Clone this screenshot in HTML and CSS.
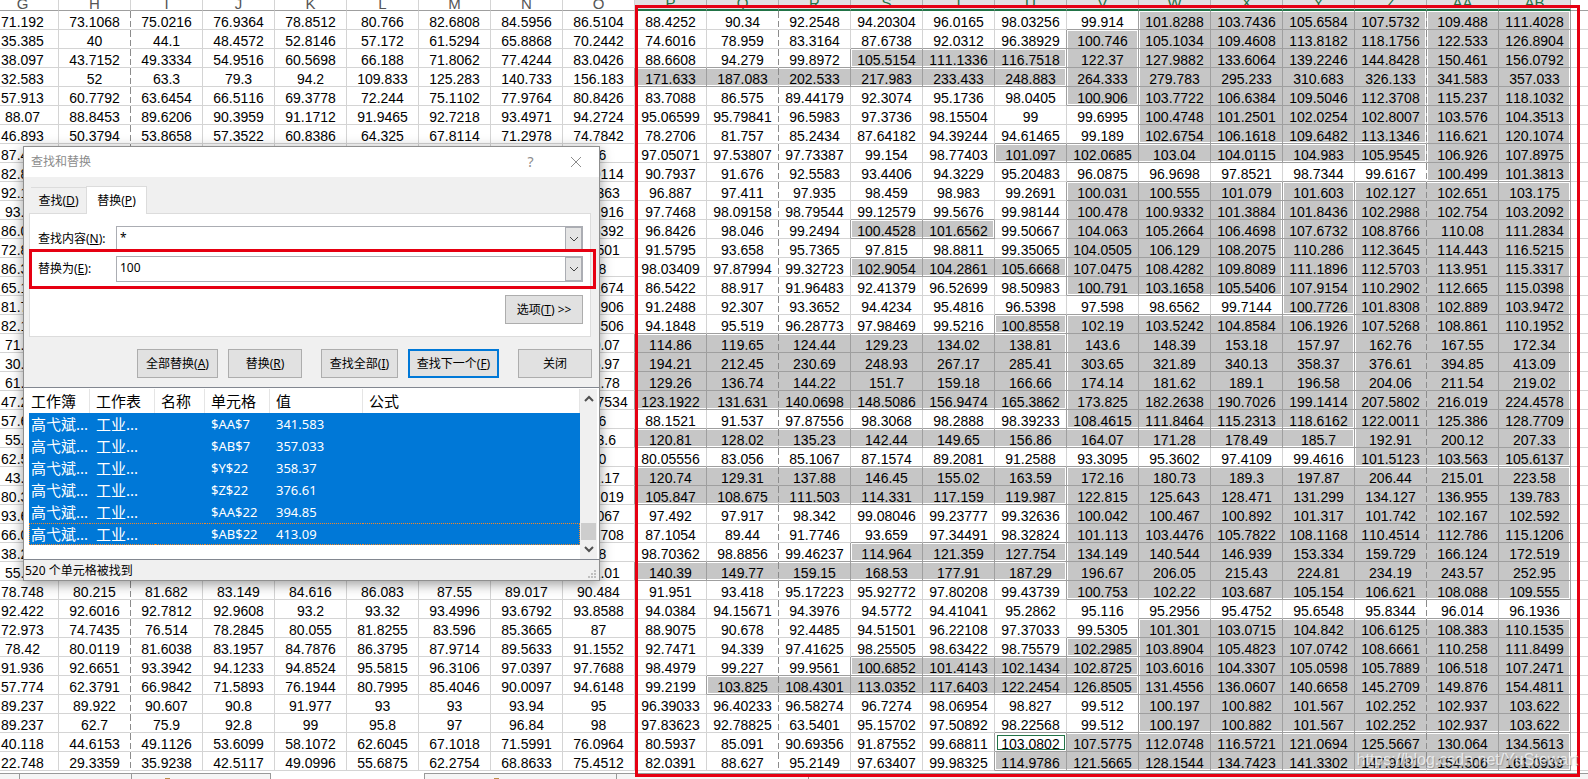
FILE: index.html
```html
<!DOCTYPE html>
<html lang="zh-CN">
<head>
<meta charset="utf-8">
<title>查找和替换</title>
<link rel="stylesheet" href="styles.css">
</head>
<body>
<main class="workbook">
  <table class="sheet" id="sheet">
    <thead><tr id="columns"></tr></thead>
    <tbody id="rows"></tbody>
  </table>
  <footer class="sheet-tabs">
    <div class="tab-group tab-group-start"><i class="w-s"></i><i class="w-m"></i><i class="w-m mark"></i></div>
    <div class="tab-active"></div>
    <div class="tab-group tab-group-end"><i class="w-l mark"></i><i class="w-l"></i><i></i></div>
  </footer>
  <div class="highlight highlight-range"></div>
  <div class="watermark">https://blog.csdn.net/YuStewart</div>
</main>

<section class="dialog" role="dialog" aria-labelledby="dialog-title">
  <header class="title-bar">
    <h1 id="dialog-title">查找和替换</h1>
    <button class="title-button" aria-label="帮助">?</button>
    <button class="title-button" aria-label="关闭窗口"><svg width="12" height="12" viewBox="0 0 12 12"><path d="M1 1L11 11M11 1L1 11" stroke="#8c8c8c" fill="none"/></svg></button>
  </header>
  <div class="tabs" role="tablist">
    <button class="tab" role="tab">查找(<u>D</u>)</button>
    <button class="tab tab-current" role="tab" aria-selected="true">替换(<u>P</u>)</button>
  </div>
  <form class="panel">
    <div class="field">
      <label for="find">查找内容(<u>N</u>):</label>
      <div class="combo"><input id="find" type="text" value="*"><button type="button" aria-label="查找记录"><svg width="10" height="6" viewBox="0 0 10 6"><path d="M1 1L5 5L9 1" stroke="#444" fill="none"/></svg></button></div>
    </div>
    <div class="field">
      <label for="replace">替换为(<u>E</u>):</label>
      <div class="combo"><input id="replace" type="text" value="100"><button type="button" aria-label="替换记录"><svg width="10" height="6" viewBox="0 0 10 6"><path d="M1 1L5 5L9 1" stroke="#444" fill="none"/></svg></button></div>
    </div>
    <button type="button" class="button button-options">选项(<u>T</u>) &gt;&gt;</button>
  </form>
  <div class="actions">
    <button class="button">全部替换(<u>A</u>)</button>
    <button class="button button-narrow">替换(<u>R</u>)</button>
    <button class="button button-all">查找全部(<u>I</u>)</button>
    <button class="button button-default">查找下一个(<u>F</u>)</button>
    <button class="button button-narrow button-apart">关闭</button>
  </div>
  <div class="results">
    <table class="result-table">
      <colgroup><col class="c-book"><col class="c-page"><col class="c-name"><col class="c-cell"><col class="c-value"><col></colgroup>
      <thead><tr><th>工作簿</th><th>工作表</th><th>名称</th><th>单元格</th><th>值</th><th>公式</th></tr></thead>
      <tbody>
        <tr><td>高弋斌...</td><td>工业...</td><td></td><td>$AA$7</td><td>341.583</td><td></td></tr>
        <tr><td>高弋斌...</td><td>工业...</td><td></td><td>$AB$7</td><td>357.033</td><td></td></tr>
        <tr><td>高弋斌...</td><td>工业...</td><td></td><td>$Y$22</td><td>358.37</td><td></td></tr>
        <tr><td>高弋斌...</td><td>工业...</td><td></td><td>$Z$22</td><td>376.61</td><td></td></tr>
        <tr><td>高弋斌...</td><td>工业...</td><td></td><td>$AA$22</td><td>394.85</td><td></td></tr>
        <tr class="focused"><td>高弋斌...</td><td>工业...</td><td></td><td>$AB$22</td><td>413.09</td><td></td></tr>
      </tbody>
    </table>
    <div class="scrollbar">
      <svg width="10" height="7" viewBox="0 0 10 7"><path d="M1 6L5 2L9 6" stroke="#505050" stroke-width="2" fill="none"/></svg>
      <div class="thumb"></div>
      <svg width="10" height="7" viewBox="0 0 10 7"><path d="M1 1L5 5L9 1" stroke="#505050" stroke-width="2" fill="none"/></svg>
    </div>
  </div>
  <footer class="status"><span>520 个单元格被找到</span>
    <svg width="10" height="10" viewBox="0 0 10 10" fill="#bfbfbf"><path d="M7 1h2v2h-2zM4 4h2v2h-2zM7 4h2v2h-2zM1 7h2v2h-2zM4 7h2v2h-2zM7 7h2v2h-2z"/></svg>
  </footer>
  <div class="highlight highlight-field"></div>
</section>
<script src="sheet.js"></script>
</body>
</html>
```
FILE: styles.css
```css
* { box-sizing: border-box; }

body {
  margin: 0;
  height: 100vh;
  overflow: hidden;
  position: relative;
  background: #fff;
  color: #000;
  font-family: "Liberation Sans", "Noto Sans CJK SC", sans-serif;
  font-kerning: none;
}

button, input {
  margin: 0;
  padding: 0;
  border: 0;
  border-radius: 0;
  background: none;
  color: inherit;
  font: inherit;
}

/* Sheet */
.workbook {
  position: relative;
  height: 100%;
  display: flex;
  flex-direction: column;
  overflow: hidden;
}

.sheet {
  flex: none;
  width: calc(100% + 13px);
  margin-left: -13px;
  table-layout: fixed;
  border-collapse: separate;
  border-spacing: 0;
  font-size: 14px;
  line-height: 14px;
}

.sheet th, .sheet td {
  padding: 0;
  border-right: 1px solid #d4d4d4;
  border-bottom: 1px solid #d4d4d4;
  font-weight: normal;
  text-align: center;
  white-space: nowrap;
}

.sheet th {
  width: 72px;
  height: 11px;
  border-bottom-color: #9f9f9f;
  color: #555;
}

.sheet th.rest { width: auto; }

.sheet th span {
  display: flex;
  align-items: flex-end;
  justify-content: center;
  height: 9px;
  font-size: 15px;
  line-height: 12px;
}

.sheet th.in-range {
  background: #e1e1e1;
  border-right-color: #b0b0b0;
  border-bottom: 2px solid #217346;
  color: #217346;
}

.sheet td {
  height: 19px;
  padding-top: 4px;
}

.sheet .rest { border-right: 0; }

.sheet td.page-break {
  border-right-color: transparent;
  background-image: linear-gradient(#8c8c8c 0 7px, transparent 7px 10px, #8c8c8c 10px 16px, transparent 16px);
  background-origin: border-box;
  background-position: right top;
  background-repeat: no-repeat;
  background-size: 1px 100%;
}

.sheet td.line-right { border-right-color: #9f9f9f; }
.sheet td.line-bottom { border-bottom-color: #9f9f9f; }
.sheet td.page-break.line-right { border-right-color: transparent; }

.sheet td.selected {
  background-color: #c6c6c6;
  box-shadow: inset var(--left, 0 0) #fff, inset var(--right, 0 0) #fff,
    inset var(--top, 0 0) #fff, inset var(--bottom, 0 0) #fff;
}

.edge-left { --left: 1px 0; }
.edge-right { --right: -1px 0; }
.edge-top { --top: 0 1px; }
.edge-bottom { --bottom: 0 -1px; }

.sheet td.active {
  background-color: #fff;
  outline: 1px solid #217346;
  outline-offset: -3px;
}

.sheet-tabs {
  flex: 1;
  display: flex;
  margin-top: 2px;
}

.tab-group {
  display: flex;
  border-top: 1px solid #999;
  background: #f5f5f5;
}

.tab-group i { position: relative; border-right: 1px solid #999; }
.tab-group i:last-child { flex: 1; border-right: 0; }
.tab-group-start { width: 271px; border-right: 1px solid #999; }
.tab-group-end { flex: 1; border-left: 1px solid #999; }
.tab-active { width: 153px; }
.w-s { width: 20px; }
.w-m { width: 112px; }
.w-l { width: 192px; }

.mark::after {
  content: "";
  position: absolute;
  left: 36%;
  bottom: 0;
  width: 5px;
  height: 1px;
  background: #b98a4a;
}

.tab-group-start .mark::after { left: 24%; }

.highlight {
  position: absolute;
  border: 3px solid #e60012;
  pointer-events: none;
}

.highlight-range { left: 635px; right: 8px; top: 5px; bottom: 2px; }
.highlight-field { left: 5px; right: 3px; top: 102px; height: 40px; }

.watermark {
  position: absolute;
  right: 10px;
  bottom: 9px;
  color: rgba(255, 255, 255, 0.7);
  font-size: 16px;
  line-height: 20px;
  text-shadow: 1px 1px 1px rgba(120, 120, 120, 0.5);
}

/* Dialog */
.dialog {
  position: absolute;
  left: 23px;
  top: 146px;
  width: 577px;
  border: 1px solid #8f8f8f;
  background: #f0f0f0;
  box-shadow: 0 3px 12px rgba(0, 0, 0, 0.4);
  font-family: "Noto Sans", "Noto Sans CJK SC", sans-serif;
  font-size: 12px;
  line-height: 16px;
}

.title-bar {
  display: flex;
  align-items: center;
  height: 30px;
  padding: 0 1px 0 7px;
  background: #fff;
  color: #8c8c8c;
}

.title-bar h1 {
  flex: 1;
  margin: 0;
  font-size: 12px;
  font-weight: normal;
}

.title-button {
  display: flex;
  align-items: center;
  justify-content: center;
  width: 45px;
  height: 30px;
  font-size: 14px;
}

.tabs {
  display: flex;
  align-items: flex-end;
  height: 37px;
  padding-left: 7px;
}

.tab {
  width: 55px;
  height: 26px;
  margin-bottom: 1px;
  border-top: 1px solid #dcdcdc;
}

.tab-current {
  position: relative;
  width: 61px;
  height: 28px;
  margin-bottom: 0;
  border: 1px solid #dcdcdc;
  border-bottom: 0;
  background: #fff;
}

.panel {
  display: flex;
  flex-direction: column;
  gap: 4px;
  margin: -1px 8px 0 5px;
  padding: 12px 7px 12px 8px;
  border: 1px solid #dcdcdc;
  background: #fff;
}

.field { display: flex; align-items: center; }
.field label { width: 78px; }

.combo {
  flex: 1;
  display: flex;
  height: 26px;
  border: 1px solid #abadb3;
}

.combo input {
  flex: 1;
  min-width: 0;
  padding: 0 0 2px 3px;
  outline: 0;
}

.combo button {
  display: flex;
  align-items: center;
  justify-content: center;
  width: 17px;
  border: 1px solid #abadb3;
  background: #e5e5e5;
}

.button {
  width: 81px;
  height: 29px;
  border: 1px solid #adadad;
  background: #e1e1e1;
  white-space: nowrap;
}

.button-options { align-self: flex-end; width: 78px; margin-top: 9px; }

.actions {
  display: flex;
  justify-content: flex-end;
  gap: 10px;
  padding: 12px 7px 9px 0;
}

.button-narrow { width: 74px; }
.button-all { width: 77px; margin-left: 9px; }
.button-apart { margin-left: 9px; }
.button-default { width: 91px; border: 2px solid #0078d7; }

.results {
  display: flex;
  justify-content: space-between;
  padding: 1px 2px 0 5px;
  border-top: 1px solid #828790;
  border-bottom: 1px solid #828790;
  background: #fff;
}

.result-table {
  width: 551px;
  margin-bottom: 14px;
  table-layout: fixed;
  border-collapse: separate;
  border-spacing: 0;
  font-size: 13px;
  line-height: 20px;
}

.c-book { width: 61px; }
.c-page { width: 65px; }
.c-name { width: 50px; }
.c-cell { width: 65px; }
.c-value { width: 93px; }

.result-table th {
  height: 24px;
  padding: 0 0 0 6px;
  border-right: 1px solid #e5e5e5;
  font-size: 15px;
  font-weight: normal;
  text-align: left;
}

.result-table td {
  height: 22px;
  padding: 0 0 0 6px;
  background: #0078d7;
  color: #fff;
  white-space: nowrap;
}

.result-table th:first-child,
.result-table td:first-child { padding-left: 2px; }
.result-table td:nth-child(-n+2) { font-size: 15px; }

.focused td { border: 1px dotted #f28728; border-width: 1px 0; line-height: 18px; }
.focused td:first-child { border-left-width: 1px; padding-left: 1px; }
.focused td:last-child { border-right-width: 1px; }

.scrollbar {
  display: flex;
  flex-direction: column;
  align-items: center;
  width: 17px;
  padding: 6px 0;
  background: #f0f0f0;
}

.thumb {
  width: 15px;
  height: 17px;
  margin: auto 0 6px;
  background: #cdcdcd;
}

.status {
  display: flex;
  align-items: flex-end;
  justify-content: space-between;
  height: 20px;
  padding: 0 2px 1px 1px;
}
```
FILE: sheet.js
```js
const columns = "G H I J K L M N O P Q R S T U V W X Y Z AA AB".split(" ");

// One line per row, G to AB; "-" is an empty cell.
const data = `
71.192 73.1068 75.0216 76.9364 78.8512 80.766 82.6808 84.5956 86.5104 88.4252 90.34 92.2548 94.20304 96.0165 98.03256 99.914 101.8288 103.7436 105.6584 107.5732 109.488 111.4028
35.385 40 44.1 48.4572 52.8146 57.172 61.5294 65.8868 70.2442 74.6016 78.959 83.3164 87.6738 92.0312 96.38929 100.746 105.1034 109.4608 113.8182 118.1756 122.533 126.8904
38.097 43.7152 49.3334 54.9516 60.5698 66.188 71.8062 77.4244 83.0426 88.6608 94.279 99.8972 105.5154 111.1336 116.7518 122.37 127.9882 133.6064 139.2246 144.8428 150.461 156.0792
32.583 52 63.3 79.3 94.2 109.833 125.283 140.733 156.183 171.633 187.083 202.533 217.983 233.433 248.883 264.333 279.783 295.233 310.683 326.133 341.583 357.033
57.913 60.7792 63.6454 66.5116 69.3778 72.244 75.1102 77.9764 80.8426 83.7088 86.575 89.44179 92.3074 95.1736 98.0405 100.906 103.7722 106.6384 109.5046 112.3708 115.237 118.1032
88.07 88.8453 89.6206 90.3959 91.1712 91.9465 92.7218 93.4971 94.2724 95.06599 95.79841 96.5983 97.3736 98.15504 99 99.6995 100.4748 101.2501 102.0254 102.8007 103.576 104.3513
46.893 50.3794 53.8658 57.3522 60.8386 64.325 67.8114 71.2978 74.7842 78.2706 81.757 85.2434 87.64182 94.39244 94.61465 99.189 102.6754 106.1618 109.6482 113.1346 116.621 120.1074
87.496 - - - - - - - 96 97.05071 97.53807 97.73387 99.154 98.77403 101.097 102.0685 103.04 104.0115 104.983 105.9545 106.926 107.8975
82.853 - - - - - - - 89.9114 90.7937 91.676 92.5583 93.4406 94.3229 95.20483 96.0875 96.9698 97.8521 98.7344 99.6167 100.499 101.3813
92.171 - - - - - - - 96.363 96.887 97.411 97.935 98.459 98.983 99.2691 100.031 100.555 101.079 101.603 102.127 102.651 103.175
93.65 - - - - - - - 97.2916 97.7468 98.09158 98.79544 99.12579 99.5676 99.98144 100.478 100.9332 101.3884 101.8436 102.2988 102.754 103.2092
86.012 - - - - - - - 95.6392 96.8426 98.046 99.2494 100.4528 101.6562 99.50667 104.063 105.2664 106.4698 107.6732 108.8766 110.08 111.2834
72.873 - - - - - - - 89.501 91.5795 93.658 95.7365 97.815 98.8811 99.35065 104.0505 106.129 108.2075 110.286 112.3645 114.443 116.5215
86.337 - - - - - - - 98 98.03409 97.87994 99.32723 102.9054 104.2861 105.6668 107.0475 108.4282 109.8089 111.1896 112.5703 113.951 115.3317
65.169 - - - - - - - 84.1674 86.5422 88.917 91.96483 92.41379 96.52699 98.50983 100.791 103.1658 105.5406 107.9154 110.2902 112.665 115.0398
81.725 - - - - - - - 90.1906 91.2488 92.307 93.3652 94.4234 95.4816 96.5398 97.598 98.6562 99.7144 100.7726 101.8308 102.889 103.9472
82.177 - - - - - - - 92.8506 94.1848 95.519 96.28773 97.98469 99.5216 100.8558 102.19 103.5242 104.8584 106.1926 107.5268 108.861 110.1952
71.75 - - - - - - - 110.07 114.86 119.65 124.44 129.23 134.02 138.81 143.6 148.39 153.18 157.97 162.76 167.55 172.34
30.05 - - - - - - - 175.97 194.21 212.45 230.69 248.93 267.17 285.41 303.65 321.89 340.13 358.37 376.61 394.85 413.09
61.94 - - - - - - - 121.78 129.26 136.74 144.22 151.7 159.18 166.66 174.14 181.62 189.1 196.58 204.06 211.54 219.02
47.243 - - - - - - - 114.7534 123.1922 131.631 140.0698 148.5086 156.9474 165.3862 173.825 182.2638 190.7026 199.1414 207.5802 216.019 224.4578
57.688 - - - - - - - 86 88.1521 91.537 97.87556 98.3068 98.2888 98.39233 108.4615 111.8464 115.2313 118.6162 122.0011 125.386 128.7709
55.92 - - - - - - - 113.6 120.81 128.02 135.23 142.44 149.65 156.86 164.07 171.28 178.49 185.7 192.91 200.12 207.33
62.552 - - - - - - - 80 80.05556 83.056 85.1067 87.1574 89.2081 91.2588 93.3095 95.3602 97.4109 99.4616 101.5123 103.563 105.6137
43.61 - - - - - - - 112.17 120.74 129.31 137.88 146.45 155.02 163.59 172.16 180.73 189.3 197.87 206.44 215.01 223.58
80.395 - - - - - - - 103.019 105.847 108.675 111.503 114.331 117.159 119.987 122.815 125.643 128.471 131.299 134.127 136.955 139.783
93.667 - - - - - - - 97.067 97.492 97.917 98.342 99.08046 99.23777 99.32636 100.042 100.467 100.892 101.317 101.742 102.167 102.592
66.094 - - - - - - - 84.7708 87.1054 89.44 91.7746 93.659 97.34491 98.32824 101.113 103.4476 105.7822 108.1168 110.4514 112.786 115.1206
38.224 - - - - - - - 98 98.70362 98.8856 99.46237 114.964 121.359 127.754 134.149 140.544 146.939 153.334 159.729 166.124 172.519
55.97 - - - - - - - 131.01 140.39 149.77 159.15 168.53 177.91 187.29 196.67 206.05 215.43 224.81 234.19 243.57 252.95
78.748 80.215 81.682 83.149 84.616 86.083 87.55 89.017 90.484 91.951 93.418 95.17223 95.92772 97.80208 99.43739 100.753 102.22 103.687 105.154 106.621 108.088 109.555
92.422 92.6016 92.7812 92.9608 93.2 93.32 93.4996 93.6792 93.8588 94.0384 94.15671 94.3976 94.5772 94.41041 95.2862 95.116 95.2956 95.4752 95.6548 95.8344 96.014 96.1936
72.973 74.7435 76.514 78.2845 80.055 81.8255 83.596 85.3665 87 88.9075 90.678 92.4485 94.51501 96.22108 97.37033 99.5305 101.301 103.0715 104.842 106.6125 108.383 110.1535
78.42 80.0119 81.6038 83.1957 84.7876 86.3795 87.9714 89.5633 91.1552 92.7471 94.339 97.41625 98.25505 98.63422 98.75579 102.2985 103.8904 105.4823 107.0742 108.6661 110.258 111.8499
91.936 92.6651 93.3942 94.1233 94.8524 95.5815 96.3106 97.0397 97.7688 98.4979 99.227 99.9561 100.6852 101.4143 102.1434 102.8725 103.6016 104.3307 105.0598 105.7889 106.518 107.2471
57.774 62.3791 66.9842 71.5893 76.1944 80.7995 85.4046 90.0097 94.6148 99.2199 103.825 108.4301 113.0352 117.6403 122.2454 126.8505 131.4556 136.0607 140.6658 145.2709 149.876 154.4811
89.237 89.922 90.607 90.8 91.977 93 93 93.94 95 96.39033 96.40233 96.58274 96.7274 98.06954 98.827 99.512 100.197 100.882 101.567 102.252 102.937 103.622
89.237 62.7 75.9 92.8 99 95.8 97 96.84 98 97.83623 92.78825 63.5401 95.15702 97.50892 98.22568 99.512 100.197 100.882 101.567 102.252 102.937 103.622
40.118 44.6153 49.1126 53.6099 58.1072 62.6045 67.1018 71.5991 76.0964 80.5937 85.091 90.69356 91.87552 99.68811 103.0802 107.5775 112.0748 116.5721 121.0694 125.5667 130.064 134.5613
22.748 29.3359 35.9238 42.5117 49.0996 55.6875 62.2754 68.8633 75.4512 82.0391 88.627 95.2149 97.63407 99.98325 114.9786 121.5665 128.1544 134.7423 141.3302 147.9181 154.506 161.0939
`.trim().split("\n").map(line => line.split(" "));

// Selected areas: first column, first row, last column, last row.
const areas = `W 1 Z 7;AA 1 AB 9;V 2 V 5;S 3 U 3;P 4 U 4;U 8 Z 8;V 10 X 15;Y 10 Y 16;Z 10 AB 24
S 12 T 12;S 14 U 14;U 17 U 17;V 17 Y 22;P 18 U 21;P 23 Y 23;P 25 U 26;V 25 AB 31;S 29 U 29
P 30 U 30;W 33 AB 38;V 34 V 34;S 35 V 35;Q 36 V 36;U 39 AB 40`
  .split(/[;\n]/).map(text => {
    const [c1, r1, c2, r2] = text.split(" ");
    return { left: columns.indexOf(c1), top: r1 - 1, right: columns.indexOf(c2), bottom: r2 - 1 };
  });

const areaAt = (r, c) => areas.find(a => r >= a.top && r <= a.bottom && c >= a.left && c <= a.right);
const breaks = ["H", "Q", "Z"];
const active = { row: 38, column: columns.indexOf("U") };

document.getElementById("columns").innerHTML = columns
  .map((name, c) => `<th${c >= 9 ? ' class="in-range"' : ""}><span>${name}</span></th>`)
  .join("") + '<th class="rest"></th>';

document.getElementById("rows").innerHTML = data.map((row, r) => {
  const cells = row.map((value, c) => {
    const area = areaAt(r, c);
    const classes = [];
    if (breaks.includes(columns[c])) classes.push("page-break");
    if (area || areaAt(r, c + 1)) classes.push("line-right");
    if (area || areaAt(r + 1, c)) classes.push("line-bottom");
    if (area) {
      classes.push("selected");
      if (c === area.left) classes.push("edge-left");
      if (c === area.right) classes.push("edge-right");
      if (r === area.top) classes.push("edge-top");
      if (r === area.bottom) classes.push("edge-bottom");
    }
    if (r === active.row && c === active.column) classes.push("active");
    return `<td class="${classes.join(" ")}">${value === "-" ? "" : value}</td>`;
  });
  return `<tr>${cells.join("")}<td class="rest"></td></tr>`;
}).join("");
```
